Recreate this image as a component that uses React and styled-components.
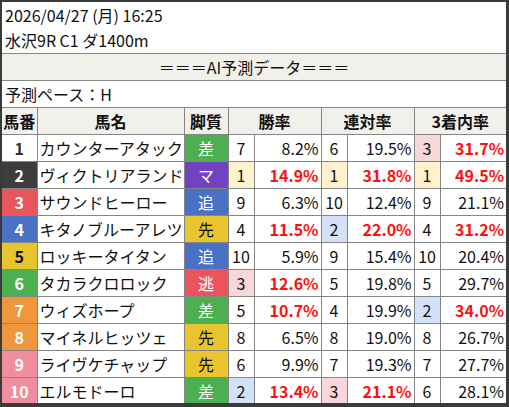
import React from 'react';
import styled, { createGlobalStyle } from 'styled-components';

const GlobalStyle = createGlobalStyle`
  html, body { margin: 0; padding: 0; background: #fff; }
  body { font-family: "Noto Sans CJK JP", "Noto Sans", sans-serif; color: #111; }
`;

const GRID = '#858585';

const Frame = styled.div`
  width: 509px;
  height: 407px;
  overflow: hidden;
  box-sizing: border-box;
  border-style: solid;
  border-color: #3a3a3a;
  border-width: 2px 3px 4px 2px;
  background: #fff;
  font-size: 16px;
`;

const Info = styled.div`
  height: 50px;
  padding: 1px 0 0 3px;
  line-height: 25px;
  border-bottom: 1px solid ${GRID};
`;

const Banner = styled.div`
  height: 26px;
  line-height: 26px;
  text-align: center;
  background: #f2f0eb;
  border-bottom: 1px solid ${GRID};
`;

const Pace = styled.div`
  height: 26px;
  line-height: 26px;
  padding-left: 3px;
  border-bottom: 1px solid ${GRID};
`;

const Table = styled.table`
  width: 504px;
  table-layout: fixed;
  border-collapse: collapse;
  border-style: hidden;
`;

const Col = styled.col`
  width: ${p => p.$w}px;
`;

const Th = styled.th`
  height: 26px;
  padding: 0;
  background: #f2f0eb;
  border: 1px solid ${GRID};
  font-weight: bold;
  text-align: center;
`;

const Cell = styled.td`
  height: 26px;
  padding: 0 2px;
  border: 1px solid ${GRID};
  white-space: nowrap;
  overflow: hidden;
`;

const NumCell = styled(Cell)`
  text-align: center;
  font-weight: bold;
  background: ${p => p.$bg};
  color: ${p => p.$fg};
`;

const NameCell = styled(Cell)`
  padding-left: 2px;
`;

const StyleCell = styled(Cell)`
  text-align: center;
  background: ${p => p.$bg};
  color: ${p => p.$fg};
`;

const rankBg = { 1: '#fff2cc', 2: '#d3e2f8', 3: '#f8d7da' };

const RankCell = styled(Cell)`
  text-align: center;
  padding: 0;
  background: ${p => rankBg[p.$rank] || '#fff'};
`;

const PctCell = styled(Cell)`
  text-align: right;
  padding-right: 2px;
  color: ${p => (p.$hot ? '#ff1010' : '#111')};
  font-weight: ${p => (p.$hot ? 'bold' : 'normal')};
`;

const colWidths = [35, 147, 44, 26, 67, 26, 67, 26, 66];

const numColors = {
  1: ['#ffffff', '#333333'],
  2: ['#3d3d3d', '#ffffff'],
  3: ['#e8555a', '#ffffff'],
  4: ['#4a72c4', '#ffffff'],
  5: ['#e8c42e', '#111111'],
  6: ['#4caf50', '#ffffff'],
  7: ['#f0963c', '#ffffff'],
  8: ['#f0963c', '#ffffff'],
  9: ['#f08d9e', '#ffffff'],
  10: ['#f08d9e', '#ffffff'],
};

const styleColors = {
  '差': ['#4caf50', '#ffffff'],
  'マ': ['#7342c2', '#ffffff'],
  '追': ['#4a72c4', '#ffffff'],
  '先': ['#e8c42e', '#111111'],
  '逃': ['#e8555a', '#ffffff'],
};

// [no, name, style, [rank, pct, hot] x3]
const horses = [
  [1, 'カウンターアタック', '差', [7, '8.2%', 0], [6, '19.5%', 0], [3, '31.7%', 1]],
  [2, 'ヴィクトリアランド', 'マ', [1, '14.9%', 1], [1, '31.8%', 1], [1, '49.5%', 1]],
  [3, 'サウンドヒーロー', '追', [9, '6.3%', 0], [10, '12.4%', 0], [9, '21.1%', 0]],
  [4, 'キタノブルーアレツ', '先', [4, '11.5%', 1], [2, '22.0%', 1], [4, '31.2%', 1]],
  [5, 'ロッキータイタン', '追', [10, '5.9%', 0], [9, '15.4%', 0], [10, '20.4%', 0]],
  [6, 'タカラクロロック', '逃', [3, '12.6%', 1], [5, '19.8%', 0], [5, '29.7%', 0]],
  [7, 'ウィズホープ', '差', [5, '10.7%', 1], [4, '19.9%', 0], [2, '34.0%', 1]],
  [8, 'マイネルヒッツェ', '先', [8, '6.5%', 0], [8, '19.0%', 0], [8, '26.7%', 0]],
  [9, 'ライヴケチャップ', '先', [6, '9.9%', 0], [7, '19.3%', 0], [7, '27.7%', 0]],
  [10, 'エルモドーロ', '差', [2, '13.4%', 1], [3, '21.1%', 1], [6, '28.1%', 0]],
];

export default function App() {
  return (
    <>
      <GlobalStyle />
      <Frame>
        <Info>
          <div>2026/04/27 (月) 16:25</div>
          <div>水沢9R C1 ダ1400m</div>
        </Info>
        <Banner>＝＝＝AI予測データ＝＝＝</Banner>
        <Pace>予測ペース：H</Pace>
        <Table>
          <colgroup>
            {colWidths.map((w, i) => <Col key={i} $w={w} />)}
          </colgroup>
          <thead>
            <tr>
              <Th>馬番</Th>
              <Th>馬名</Th>
              <Th>脚質</Th>
              <Th colSpan={2}>勝率</Th>
              <Th colSpan={2}>連対率</Th>
              <Th colSpan={2}>3着内率</Th>
            </tr>
          </thead>
          <tbody>
            {horses.map(([no, name, st, ...rates]) => (
              <tr key={no}>
                <NumCell $bg={numColors[no][0]} $fg={numColors[no][1]}>{no}</NumCell>
                <NameCell>{name}</NameCell>
                <StyleCell $bg={styleColors[st][0]} $fg={styleColors[st][1]}>{st}</StyleCell>
                {rates.map(([rank, pct, hot], i) => (
                  <React.Fragment key={i}>
                    <RankCell $rank={rank}>{rank}</RankCell>
                    <PctCell $hot={hot}>{pct}</PctCell>
                  </React.Fragment>
                ))}
              </tr>
            ))}
          </tbody>
        </Table>
      </Frame>
    </>
  );
}
